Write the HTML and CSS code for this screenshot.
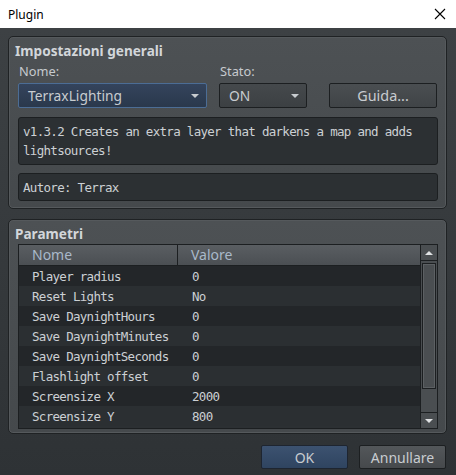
FILE: index.html
```html
<html lang="it">
<head>
  <meta charset="UTF-8">
  <title>Plugin</title>
  <link rel="stylesheet" href="styles.css">
</head>
<body>
  <div class="titlebar">
    <span class="title">Plugin</span>
    <span class="close">
      <svg width="12" height="12" viewBox="0 0 12 12"><path d="M1 1 L11 11 M11 1 L1 11" stroke="#000" stroke-width="1.1" fill="none"/></svg>
    </span>
  </div>

  <div class="dialog">
    <!-- Impostazioni generali -->
    <div class="group group-general">
      <div class="group-title">Impostazioni generali</div>
      <div class="row-labels">
        <span class="lbl lbl-nome">Nome:</span>
        <span class="lbl">Stato:</span>
      </div>
      <div class="row-controls">
        <div class="combo combo-active combo-nome">
          <span>TerraxLighting</span><span class="arrow"></span>
        </div>
        <div class="combo combo-stato">
          <span>ON</span><span class="arrow"></span>
        </div>
        <div class="btn btn-guida">Guida...</div>
      </div>
      <div class="textbox desc">v1.3.2 Creates an extra layer that darkens a map and adds lightsources!</div>
      <div class="textbox author">Autore: Terrax</div>
    </div>

    <!-- Parametri -->
    <div class="group group-params">
      <div class="group-title">Parametri</div>
      <div class="table">
        <div class="table-body">
          <div class="thead">
            <div class="col-nome">Nome</div>
            <div class="col-valore">Valore</div>
          </div>
          <div class="tr"><div class="col-nome">Player radius</div><div class="col-valore">0</div></div>
          <div class="tr"><div class="col-nome">Reset Lights</div><div class="col-valore">No</div></div>
          <div class="tr"><div class="col-nome">Save DaynightHours</div><div class="col-valore">0</div></div>
          <div class="tr"><div class="col-nome">Save DaynightMinutes</div><div class="col-valore">0</div></div>
          <div class="tr"><div class="col-nome">Save DaynightSeconds</div><div class="col-valore">0</div></div>
          <div class="tr"><div class="col-nome">Flashlight offset</div><div class="col-valore">0</div></div>
          <div class="tr"><div class="col-nome">Screensize X</div><div class="col-valore">2000</div></div>
          <div class="tr"><div class="col-nome">Screensize Y</div><div class="col-valore">800</div></div>
        </div>
        <div class="scrollbar">
          <div class="sb-btn"><span class="sb-up"></span></div>
          <div class="sb-track"><div class="sb-thumb"></div></div>
          <div class="sb-btn"><span class="sb-down"></span></div>
        </div>
      </div>
    </div>

    <div class="footer">
      <div class="btn btn-ok">OK</div>
      <div class="btn btn-cancel">Annullare</div>
    </div>
  </div>
</body>
</html>
```

FILE: styles.css
```css
body { margin: 0; font-family: "Noto Sans", "Open Sans", sans-serif; font-size: 12px; }

.titlebar {
  height: 28px;
  background: #fff;
  display: flex;
  align-items: center;
  justify-content: space-between;
  padding: 0 10px 0 8px;
  color: #000;
}
.titlebar .title { font-size: 12px; }
.close { display: flex; }

.dialog {
  height: 447px;
  box-sizing: border-box;
  padding: 8px 9px 0 8px;
  background: linear-gradient(#3d4144, #2e3235);
}

/* group boxes */
.group {
  border: 1px solid #1f2224;
  border-radius: 5px;
  background: linear-gradient(#4d5154, #45494c);
  box-shadow: inset 0 0 0 1px #55595c;
  padding: 0 9px 7px 9px;
}
.group-title {
  font-weight: bold;
  font-size: 13.6px;
  color: #d2d6da;
  margin-left: -3px;
  height: 24px;
  line-height: 27px;
}
.group-general { height: 164px; }
.group-params { margin-top: 10px; height: 206px; }

.row-labels { display: flex; height: 22px; line-height: 20px; color: #c6cace; font-size: 12.8px; }
.lbl { padding-left: 1px; }
.lbl-nome { width: 200px; }

.row-controls { display: flex; height: 25px; }

.combo {
  box-sizing: border-box;
  height: 25px;
  border: 1px solid #1c1f21;
  border-radius: 2px;
  display: flex;
  align-items: center;
  justify-content: space-between;
  padding: 0 7px 0 9px;
  color: #c8ccd0;
  font-size: 13.8px;
  background: linear-gradient(#45494c, #3c4043);
}
.combo-active {
  border-color: #4c6d95;
  background: linear-gradient(#34445c, #2a384c);
}
.combo-nome { width: 189px; }
.combo-stato { width: 88px; margin-left: 12px; }
.arrow {
  width: 0; height: 0;
  border-left: 4px solid transparent;
  border-right: 4px solid transparent;
  border-top: 4px solid #c8ccd0;
}

.btn {
  box-sizing: border-box;
  height: 25px;
  border: 1px solid #1c1f21;
  border-radius: 2px;
  display: flex;
  align-items: center;
  justify-content: center;
  color: #c8ccd0;
  font-size: 14.4px;
  background: linear-gradient(#4a4e51, #404447);
}
.btn-guida { width: 108px; margin-left: 22px; }

.textbox {
  box-sizing: border-box;
  border: 1px solid #1c1f21;
  border-radius: 3px;
  background: #2c3033;
  color: #ccd0d4;
  font-family: "DejaVu Sans Mono", monospace;
  font-size: 12.5px;
  letter-spacing: -0.7px;
  padding: 4px 4px 2px 4px;
  line-height: 19px;
  width: 420px;
}
.desc { height: 48px; margin-top: 9px; }
.author { height: 28px; margin-top: 8px; }

/* parameter table */
.table {
  display: flex;
  width: 420px;
  height: 185px;
  box-sizing: border-box;
  border: 1px solid #1c1f21;
  background: #2c3033;
}
.table-body { flex: 1; }
.thead {
  display: flex;
  height: 20px;
  line-height: 20px;
  border-bottom: 1px solid #1c1f21;
  background: linear-gradient(#5a5e62, #4b4f53);
  color: #a9b9ca;
  font-size: 14px;
}
.thead .col-nome { border-right: 1px solid #1c1f21; }
.col-nome { width: 159px; padding-left: 13px; box-sizing: border-box; }
.col-valore { padding-left: 13px; }
.tr {
  display: flex;
  height: 20px;
  line-height: 21px;
  color: #ccd0d4;
  font-family: "DejaVu Sans Mono", monospace;
  font-size: 12.5px;
  letter-spacing: -0.7px;
  background: #232629;
}
.tr:nth-of-type(odd) { background: #2b2f32; }
.tr .col-nome { width: 160px; }

.scrollbar {
  width: 16px;
  display: flex;
  flex-direction: column;
  border-left: 1px solid #1c1f21;
  background: #4a4e51;
}
.sb-btn {
  height: 15px;
  display: flex;
  align-items: center;
  justify-content: center;
  background: #4a4e51;
}
.sb-track {
  flex: 1;
  border-top: 1px solid #1c1f21;
  border-bottom: 1px solid #1c1f21;
  padding: 2px 1px 0 1px;
}
.sb-thumb {
  height: 124px;
  border: 1px solid #1c1f21;
  box-shadow: inset 0 0 0 1px #5c6063;
  background: #4a4e51;
}
.sb-up, .sb-down {
  width: 0; height: 0;
  border-left: 4px solid transparent;
  border-right: 4px solid transparent;
}
.sb-up { border-bottom: 4px solid #e0e2e4; }
.sb-down { border-top: 4px solid #e0e2e4; }

.footer {
  display: flex;
  justify-content: flex-end;
  margin-top: 11px;
  margin-right: 1px;
}
.btn-ok { width: 87px; height: 24px; border-color: #1e2530; background: linear-gradient(#3c5270, #2f4460); font-size: 14px; }
.btn-cancel { width: 87px; height: 24px; margin-left: 11px; font-size: 14px; background: linear-gradient(#53575a, #46494c); }
```
